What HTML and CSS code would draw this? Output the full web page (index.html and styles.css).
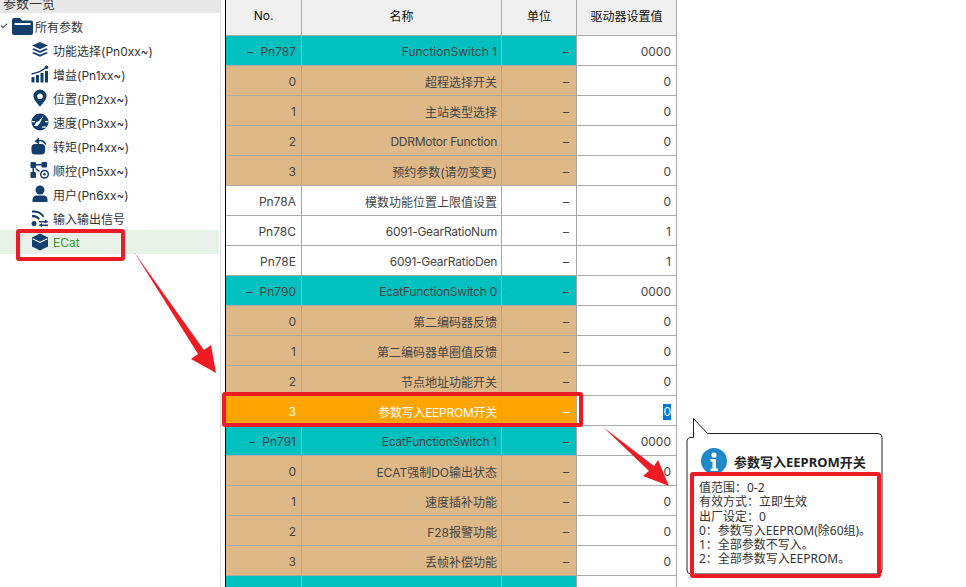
FILE: index.html
```html
<!DOCTYPE html>
<html lang="zh-CN">
<head>
    <meta charset="UTF-8">
    <meta name="viewport" content="width=device-width, initial-scale=1.0">
    <title>参数一览</title>
    <link rel="stylesheet" href="styles.css">
</head>
<body>
    <div class="page">
        <!-- Parameter tree -->
        <div class="side">
            <div class="side-title"><span>参数一览</span></div>
            <div class="tree-row root">
                <svg class="caret" viewBox="0 0 8 6"><path d="M1 2.500 3 4.600 7 .8" /></svg>
                <svg class="folder" viewBox="0 0 21 17"><path d="M2 0h6l2 2.500h9a2 2 0 0 1 2 2V15a2 2 0 0 1-2 2H2a2 2 0 0 1-2-2V2a2 2 0 0 1 2-2z" /><rect x="2.500" y="5" width="16" height="2" fill="#fff" /></svg>
                <span>所有参数</span>
            </div>
            <div class="tree-row">
                <svg class="icon" viewBox="0 0 18 18"><path d="M9 1l8 3.600-8 3.600-8-3.600z" /><path d="M3 7.300l6 2.700 6-2.700 2 1-8 3.600-8-3.600z" /><path d="M3 11l6 2.700 6-2.700 2 1-8 3.800-8-3.800z" /></svg>
                <span>功能选择(Pn0xx~)</span>
            </div>
            <div class="tree-row">
                <svg class="icon" viewBox="0 0 18 18"><rect x=".5" y="12" width="3" height="5.500" /><rect x="5" y="10" width="3" height="7.500" /><rect x="9.500" y="8" width="3" height="9.500" /><rect x="14" y="6" width="3" height="11.500" /><path d="M.5 9C6 8 11 6 15 2.500" fill="none" stroke="#123e6e" stroke-width="1.300" /><circle cx="15.500" cy="2.300" r="1.800" /></svg>
                <span>增益(Pn1xx~)</span>
            </div>
            <div class="tree-row">
                <svg class="icon" viewBox="0 0 18 18"><path fill-rule="evenodd" d="M9 .5a6.600 6.600 0 0 1 6.600 6.600C15.600 11.500 9 17.500 9 17.500S2.400 11.500 2.400 7.100A6.600 6.600 0 0 1 9 .5zm0 3.900a2.800 2.800 0 1 0 0 5.600 2.800 2.800 0 0 0 0-5.600z" /></svg>
                <span>位置(Pn2xx~)</span>
            </div>
            <div class="tree-row">
                <svg class="icon" viewBox="0 0 18 18"><circle cx="9" cy="9" r="8.500" /><path d="M12.500 2.500 8 8l-2.500 1L3 13h3.500l2-2.500 1.500-2.500zM1 8h3v1.300H1zM14 8h3v1.300h-3zM11 13.500h4.500v1.300H11z" fill="#fff" /></svg>
                <span>速度(Pn3xx~)</span>
            </div>
            <div class="tree-row">
                <svg class="icon" viewBox="0 0 18 18"><rect x=".5" y="7" width="13.500" height="10.500" rx="3.500" /><path d="M6.500 4.200C10 2.800 13.500 4 14.800 7.500" fill="none" stroke="#123e6e" stroke-width="1.500" /><path d="M8 .5v7L3.500 4.200z" /></svg>
                <span>转矩(Pn4xx~)</span>
            </div>
            <div class="tree-row">
                <svg class="icon wide" viewBox="0 0 20 18"><rect x=".5" y="1" width="5.500" height="6" rx="1" /><rect x="11.500" y="1" width="5.500" height="5.500" rx="1" /><rect x=".5" y="11" width="5.500" height="6" rx="1" /><path d="M6 3h6v1.500H6zM2.500 7H4v4H2.500zM6 7l4 3-1 1-4-3z" /><circle cx="14.500" cy="13.200" r="3.800" fill="none" stroke="#123e6e" stroke-width="1.500" /><circle cx="14.500" cy="13.200" r="1.300" /></svg>
                <span>顺控(Pn5xx~)</span>
            </div>
            <div class="tree-row">
                <svg class="icon" viewBox="0 0 18 18"><circle cx="9" cy="5" r="4.500" /><path d="M1.500 17v-2.500c0-2.500 2-4 4-4h7c2 0 4 1.500 4 4V17z" /></svg>
                <span>用户(Pn6xx~)</span>
            </div>
            <div class="tree-row">
                <svg class="icon" viewBox="0 0 18 18"><path d="M1 1.500c5-.5 10 1.500 12.500 6l-2 .5C9.500 4.500 5.500 3.200 1 3.500zM1 6c3-.3 6 .8 8 3.500L7.500 11C6 9 3.500 8 1 8.200z" /><circle cx="3" cy="14.500" r="2.500" /><path d="M8 12h6v-1.500l3.500 2.300L14 14.500V13.500H8zM17 15.500h-6V14l-3.500 2.200L11 18v-1h6z" /></svg>
                <span>输入输出信号</span>
            </div>
            <div class="tree-row picked">
                <svg class="icon" viewBox="0 0 18 18"><path d="M9 .5l8 4v9l-8 4-8-4v-9z" /><path d="M1.800 5.200 9 8.700l7.200-3.500.4 1L9 10 1.400 6.200z" fill="#fff" /></svg>
                <span>ECat</span>
            </div>
        </div>

        <!-- Parameter table -->
        <table class="grid">
            <colgroup>
                <col class="col-no"><col class="col-name"><col class="col-unit"><col class="col-value">
            </colgroup>
            <thead>
                <tr><th>No.</th><th>名称</th><th>单位</th><th>驱动器设置值</th></tr>
            </thead>
            <tbody>
                <tr class="group"><td><span class="fold">–</span>Pn787</td><td>FunctionSwitch 1</td><td class="unit">–</td><td>0000</td></tr>
                <tr class="sub"><td>0</td><td>超程选择开关</td><td class="unit">–</td><td>0</td></tr>
                <tr class="sub"><td>1</td><td>主站类型选择</td><td class="unit">–</td><td>0</td></tr>
                <tr class="sub"><td>2</td><td class="tight">DDRMotor Function</td><td class="unit">–</td><td>0</td></tr>
                <tr class="sub"><td>3</td><td>预约参数(请勿变更)</td><td class="unit">–</td><td>0</td></tr>
                <tr><td>Pn78A</td><td>模数功能位置上限值设置</td><td class="unit">–</td><td>0</td></tr>
                <tr><td>Pn78C</td><td class="tight">6091-GearRatioNum</td><td class="unit">–</td><td>1</td></tr>
                <tr><td>Pn78E</td><td class="tight">6091-GearRatioDen</td><td class="unit">–</td><td>1</td></tr>
                <tr class="group"><td><span class="fold">–</span>Pn790</td><td class="tight">EcatFunctionSwitch 0</td><td class="unit">–</td><td>0000</td></tr>
                <tr class="sub"><td>0</td><td>第二编码器反馈</td><td class="unit">–</td><td>0</td></tr>
                <tr class="sub"><td>1</td><td>第二编码器单圈值反馈</td><td class="unit">–</td><td>0</td></tr>
                <tr class="sub"><td>2</td><td>节点地址功能开关</td><td class="unit">–</td><td>0</td></tr>
                <tr class="current"><td>3</td><td class="tight">参数写入EEPROM开关</td><td class="unit">–</td><td><span class="selected">0</span></td></tr>
                <tr class="group"><td><span class="fold">–</span>Pn791</td><td class="tight">EcatFunctionSwitch 1</td><td class="unit">–</td><td>0000</td></tr>
                <tr class="sub"><td>0</td><td>ECAT强制DO输出状态</td><td class="unit">–</td><td>0</td></tr>
                <tr class="sub"><td>1</td><td>速度插补功能</td><td class="unit">–</td><td>0</td></tr>
                <tr class="sub"><td>2</td><td>F28报警功能</td><td class="unit">–</td><td>0</td></tr>
                <tr class="sub"><td>3</td><td>丢帧补偿功能</td><td class="unit">–</td><td>0</td></tr>
                <tr class="group"><td></td><td></td><td class="unit"></td><td></td></tr>
            </tbody>
        </table>

        <!-- Tooltip for the selected parameter -->
        <div class="tip">
            <svg class="tip-shape" viewBox="0 0 200 162">
                <path d="M6 19.500H7.500V.5L21.500 15.500H192a4 4 0 0 1 4 4V152a4 4 0 0 1-4 4H5a4 4 0 0 1-4-4V24a4 4 0 0 1 5-4.500z" />
            </svg>
            <div class="tip-head">
                <svg class="tip-icon" viewBox="0 0 26 26"><circle cx="13" cy="13" r="13" fill="#1e88c9" /><circle cx="13" cy="7" r="2.600" fill="#fff" /><path d="M9.500 11h5.500v9.500h2V23H9.500v-2.500h2V13.500h-2z" fill="#fff" /></svg>
                <b>参数写入EEPROM开关</b>
            </div>
            <div class="tip-body">
                <div>值范围：0-2</div>
                <div>有效方式：立即生效</div>
                <div>出厂设定：0</div>
                <div>0：参数写入EEPROM(除60组)。</div>
                <div>1：全部参数不写入。</div>
                <div>2：全部参数写入EEPROM。</div>
            </div>
        </div>

        <!-- Red markup drawn on top of the screenshot -->
        <svg class="marks" viewBox="0 0 966 587">
            <rect x="18" y="231" width="105" height="28" rx="1" />
            <rect x="224" y="394" width="357" height="31" rx="1" />
            <rect x="692" y="474" width="187" height="102" rx="1" />
            <polygon points="134,252 204,350 211,345 216,373 191,359 198,354" />
            <polygon points="603,427 654,466 658,460 669,486 643,476 649,471" />
        </svg>
    </div>
</body>
</html>
```

FILE: styles.css
```css
html, body {
    margin: 0;
    padding: 0;
    height: 100%;
    overflow: hidden;
    background: #fff;
}
.page {
    position: relative;
    display: flex;
    align-items: flex-start;
    width: 966px;
    height: 587px;
    overflow: hidden;
    font-family: Inter, "Noto Sans CJK SC", sans-serif;
    font-size: 12px;
    color: #444;
}
.side {
    flex: none;
    width: 220px;
    height: 587px;
    margin-right: 4px;
    border-right: 1px solid #dcdcdc;
}
.side-title {
    height: 13px;
    padding-left: 3px;
    background: #e8e8e8;
    overflow: hidden;
    margin-bottom: 1px;
}
.side-title span {
    display: block;
    margin-top: -5px;
    line-height: 16px;
    font-size: 13px;
    color: #333;
}
.tree-row {
    display: flex;
    align-items: center;
    height: 24px;
    padding-left: 31px;
    color: #333;
}
.tree-row span {
    margin-left: 4px;
}
.icon {
    flex: none;
    width: 18px;
    height: 18px;
    fill: #123e6e;
}
.icon.wide {
    width: 20px;
    margin-left: -1px;
    margin-right: -1px;
}
.tree-row.root {
    padding-left: 0;
}
.caret {
    flex: none;
    width: 8px;
    height: 6px;
    margin-right: 4px;
    fill: none;
    stroke: #555;
    stroke-width: 1.2;
}
.folder {
    flex: none;
    width: 21px;
    height: 17px;
    margin-right: -2px;
    fill: #123e6e;
}
.tree-row.picked {
    width: 188px;
    background: #e8f2e8;
    color: #2e9a2e;
}

.grid {
    flex: none;
    table-layout: fixed;
    width: 452px;
    border-collapse: separate;
    border-spacing: 0;
    border-left: 1px solid #000;
}
.col-no { width: 76px; }
.col-name { width: 200px; }
.col-unit { width: 75px; }
.col-value { width: 100px; }
.grid th {
    height: 36px;
    box-sizing: border-box;
    padding: 0 0 4px;
    background: #f0f0f0;
    border-right: 1px solid #a9a9a9;
    border-bottom: 1px solid #a9a9a9;
    font-weight: normal;
    color: #111;
    text-align: center;
}
.grid td {
    height: 30px;
    box-sizing: border-box;
    padding: 2px 5px 0 0;
    border-right: 1px solid #a9a9a9;
    border-bottom: 1px solid #a9a9a9;
    text-align: right;
    white-space: nowrap;
}
.grid td:nth-child(2) {
    padding-right: 4px;
}
.grid td.tight {
    letter-spacing: -0.25px;
}
.grid td.unit {
    padding-right: 7px;
}
.grid td:last-child {
    background: #fff;
}
.group td { background: #00c0c0; }
.sub td { background: #deb887; }
.current td { background: #ffa500; color: #fff; }
.current td:last-child { color: #444; }
.fold {
    margin-right: 7px;
}
.selected {
    display: inline-block;
    line-height: 16px;
    background: #0078d7;
    color: #fff;
}

.tip {
    position: absolute;
    left: 686px;
    top: 418px;
    width: 200px;
    height: 162px;
    font-family: "Noto Sans", "Noto Sans CJK SC", sans-serif;
}
.tip-shape {
    position: absolute;
    left: 0;
    top: 0;
    width: 200px;
    height: 162px;
    fill: #fff;
    stroke: #222;
    stroke-width: 1;
}
.tip-head {
    position: relative;
    display: flex;
    align-items: center;
    gap: 7px;
    padding: 30px 0 0 15px;
    color: #222;
    font-size: 13px;
}
.tip-icon {
    flex: none;
    width: 26px;
    height: 26px;
}
.tip-body {
    position: relative;
    margin: 7px 0 0 13px;
    line-height: 14.300px;
    color: #333;
    white-space: nowrap;
}

.marks {
    position: absolute;
    left: 0;
    top: 0;
    width: 966px;
    height: 587px;
    pointer-events: none;
}
.marks rect {
    fill: none;
    stroke: #ed1c24;
    stroke-width: 4;
}
.marks polygon {
    fill: #ed1c24;
}
```
